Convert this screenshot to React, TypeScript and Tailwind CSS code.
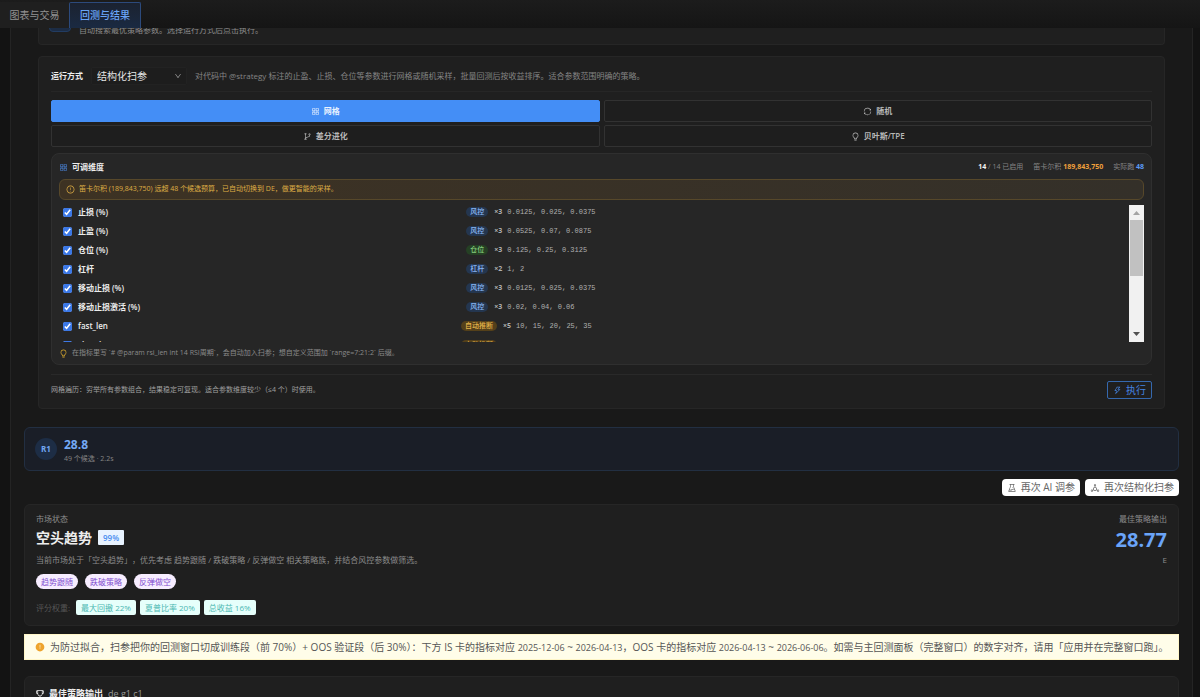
import type { ReactNode } from "react";
import {
  AiFillExclamationCircle,
  AiOutlineAppstore,
  AiOutlineBranches,
  AiOutlineBulb,
  AiOutlineDeploymentUnit,
  AiOutlineDown,
  AiOutlineExclamationCircle,
  AiOutlineExperiment,
  AiOutlineSync,
  AiOutlineThunderbolt,
  AiOutlineTrophy,
} from "react-icons/ai";

type Tone = "blue" | "green" | "amber";

const toneClass: Record<Tone, string> = {
  blue: "bg-[#24364f] text-[#8bb8f5]",
  green: "bg-[#254024] text-[#86cf7c]",
  amber: "bg-[#54401a] text-[#e5b54a]",
};

const dimensions: { id: string; name: string; tag: string; tone: Tone; count: number; values: string }[] = [
  { id: "sl", name: "止损 (%)", tag: "风控", tone: "blue", count: 3, values: "0.0125, 0.025, 0.0375" },
  { id: "tp", name: "止盈 (%)", tag: "风控", tone: "blue", count: 3, values: "0.0525, 0.07, 0.0875" },
  { id: "pos", name: "仓位 (%)", tag: "仓位", tone: "green", count: 3, values: "0.125, 0.25, 0.3125" },
  { id: "lev", name: "杠杆", tag: "杠杆", tone: "blue", count: 2, values: "1, 2" },
  { id: "trail", name: "移动止损 (%)", tag: "风控", tone: "blue", count: 3, values: "0.0125, 0.025, 0.0375" },
  { id: "trail-act", name: "移动止损激活 (%)", tag: "风控", tone: "blue", count: 3, values: "0.02, 0.04, 0.06" },
  { id: "fast", name: "fast_len", tag: "自动推断", tone: "amber", count: 5, values: "10, 15, 20, 25, 35" },
  { id: "slow", name: "slow_len", tag: "自动推断", tone: "amber", count: 5, values: "20, 30, 40, 50, 70" },
];

const methods = [
  { label: "网格", icon: <AiOutlineAppstore />, active: true },
  { label: "随机", icon: <AiOutlineSync />, active: false },
  { label: "差分进化", icon: <AiOutlineBranches />, active: false },
  { label: "贝叶斯/TPE", icon: <AiOutlineBulb />, active: false },
];

function Header() {
  return (
    <header className="flex h-7 shrink-0 items-end bg-gradient-to-b from-[#1c1c1c] to-[#151515]">
      <button className="h-[26px] w-[69px] bg-[#1f1f1f] text-[10px] text-[#929292]">图表与交易</button>
      <button className="h-[26px] w-[72px] rounded-t-xs border border-b-0 border-[#2c4a7c] bg-gradient-to-b from-[#1b2230] to-[#1a2a42] text-[10px] font-medium text-[#6aa5f8]">
        回测与结果
      </button>
    </header>
  );
}

function Dimensions() {
  return (
    <section className="mt-1.5 rounded-lg border border-[#2f2f2f] bg-[#262626] px-[7px] pt-1.5 pb-1">
      <div className="flex h-[14px] items-center justify-between text-[7px] text-[#858585]">
        <h3 className="flex items-center gap-1 text-[8px] font-bold text-[#eeeeee]">
          <AiOutlineAppstore className="size-[9px] text-[#4a86de]" />
          可调维度
        </h3>
        <div className="flex gap-[10px]">
          <span>
            <b className="text-[#f2f2f2]">14</b> / 14 已启用
          </span>
          <span>
            笛卡尔积 <b className="text-[#f0a03c]">189,843,750</b>
          </span>
          <span>
            实际跑 <b className="text-[#5c9af5]">48</b>
          </span>
        </div>
      </div>
      <div
        role="alert"
        className="mt-[5px] flex h-[21px] items-center gap-1 rounded-md border border-[#57482a] bg-gradient-to-r from-[#3d3223] to-[#343029] px-1.5 text-[7px] text-[#dfae45]"
      >
        <AiOutlineExclamationCircle className="size-[9px]" />
        笛卡尔积 (189,843,750) 远超 48 个候选预算，已自动切换到 DE，做更智能的采样。
      </div>
      <div className="mt-[5px] flex h-[137px]">
        <div className="min-w-0 flex-1 overflow-hidden">
          {dimensions.map((d) => (
            <div key={d.id} className="grid h-[19px] grid-cols-[9px_61fr_auto_100fr] items-center gap-x-1.5 pr-2 pb-[5px] pl-1">
              <input id={d.id} type="checkbox" defaultChecked className="size-[9px] accent-[#3b78e7]" />
              <label htmlFor={d.id} className="text-[8px] font-semibold text-[#ececec]">
                {d.name}
              </label>
              <span className={`rounded-full px-1 text-[7px] leading-[10px] font-medium ${toneClass[d.tone]}`}>{d.tag}</span>
              <span className="font-['Liberation_Mono','Noto_Sans_CJK_SC',monospace] text-[7px] text-[#b0b0b0]">
                <b className="mr-[5px] font-['Open_Sans','Noto_Sans_CJK_SC',sans-serif]">×{d.count}</b>
                {d.values}
              </span>
            </div>
          ))}
        </div>
        <div className="flex w-[15px] shrink-0 flex-col items-center bg-[#f1f1f1]" aria-hidden="true">
          <svg viewBox="0 0 15 15" className="size-[15px]">
            <path d="M4 10h7L7.500 6z" fill="#a3a3a3" />
          </svg>
          <div className="h-14 w-[13px] bg-[#c1c1c1]" />
          <svg viewBox="0 0 15 15" className="mt-auto size-[15px]">
            <path d="M4 5h7L7.500 9z" fill="#505050" />
          </svg>
        </div>
      </div>
      <p className="mt-1 flex h-[14px] items-center gap-1 text-[7px] text-[#8a8a8a]">
        <AiOutlineBulb className="size-[9px] text-[#d9a92e]" />
        在指标里写 `# @param rsi_len int 14 RSI周期`，会自动加入扫参；想自定义范围加 `range=7:21:2` 后缀。
      </p>
    </section>
  );
}

function RunCard() {
  return (
    <section className="mx-[27px] mt-[11px] rounded-sm border border-[#262626] bg-[#1f1f1f] px-3 pt-[10px] pb-[9px]">
      <div className="flex h-[25px] items-start border-b border-[#262626]">
        <label htmlFor="mode" className="text-[8px] leading-[18px] font-bold text-[#eeeeee]">
          运行方式
        </label>
        <div className="relative ml-2">
          <select
            id="mode"
            className="block h-[18px] w-24 appearance-none rounded-xs border border-[#222222] bg-[#1d1d1d] px-[5px] text-[10px] leading-4 text-[#e6e6e6]"
          >
            <option>结构化扫参</option>
          </select>
          <AiOutlineDown className="pointer-events-none absolute top-[5px] right-[5px] size-2 text-[#9a9a9a]" />
        </div>
        <p className="ml-2 text-[8px] leading-[18px] text-[#858585]">
          对代码中 @strategy 标注的止盈、止损、仓位等参数进行网格或随机采样，批量回测后按收益排序。适合参数范围明确的策略。
        </p>
      </div>
      <div className="mt-2 grid grid-cols-2 gap-x-1 gap-y-[3px]">
        {methods.map((m) => (
          <button
            key={m.label}
            className={`flex h-[22px] items-center justify-center gap-1 rounded-xs border text-[8px] font-semibold ${
              m.active ? "border-[#448ef6] bg-[#448ef6] text-[#e9f2ff]" : "border-[#323232] bg-[#1e1e1e] text-[#b8b8b8]"
            }`}
          >
            <span className="text-[9px]">{m.icon}</span>
            {m.label}
          </button>
        ))}
      </div>
      <Dimensions />
      <div className="mt-[9px] flex items-center justify-between border-t border-[#292929] pt-1.5">
        <p className="text-[7px] text-[#a0a0a0]">
          网格遍历：穷举所有参数组合，结果稳定可复现。适合参数维度较少（≤4 个）时使用。
        </p>
        <button className="flex h-[18px] w-[45px] items-center justify-center gap-1 rounded-xs border border-[#3568ae] text-[10px] text-[#4583e0]">
          <AiOutlineThunderbolt className="size-[9px]" />
          执行
        </button>
      </div>
    </section>
  );
}

function Tag({ children, className }: { children: ReactNode; className: string }) {
  return <span className={`h-[15px] px-[5px] text-[8px] leading-[15px] ${className}`}>{children}</span>;
}

function MarketCard() {
  return (
    <section className="mt-2 flex h-[122px] justify-between rounded-md border border-[#262626] bg-[#1f1f1f] px-[11px] py-2">
      <div>
        <p className="text-[8px] leading-3 text-[#8c8c8c]">市场状态</p>
        <div className="mt-[3px] flex h-[18px] items-center gap-1.5">
          <h2 className="text-[14px] font-bold text-[#ededed]">空头趋势</h2>
          <Tag className="rounded-[1px] bg-[#e8f3ff] font-semibold text-[#4a8df0]">99%</Tag>
        </div>
        <p className="mt-2 text-[8px] leading-3 text-[#8c8c8c] [text-spacing-trim:space-all]">
          当前市场处于「空头趋势」，优先考虑 趋势跟随 / 跌破策略 / 反弹做空 相关策略族，并结合风控参数做筛选。
        </p>
        <div className="mt-2 flex gap-[7px]">
          {["趋势跟随", "跌破策略", "反弹做空"].map((t) => (
            <Tag key={t} className="rounded-full bg-[#f7edff] text-[#8350cf]">
              {t}
            </Tag>
          ))}
        </div>
        <div className="mt-[11px] flex items-center gap-1">
          <span className="mr-0.5 text-[8px] text-[#555555]">评分权重:</span>
          {["最大回撤 22%", "夏普比率 20%", "总收益 16%"].map((t) => (
            <Tag key={t} className="rounded-xs bg-[#e6fffb] text-[#4bb8b2]">
              {t}
            </Tag>
          ))}
        </div>
      </div>
      <div className="text-right">
        <p className="text-[8px] leading-3 text-[#8c8c8c]">最佳策略输出</p>
        <p className="mt-[3px] text-[20px] leading-6 font-bold text-[#6aa4f8]">28.77</p>
        <p className="mt-0.5 text-[8px] leading-3 text-[#8c8c8c]">E</p>
      </div>
    </section>
  );
}

export default function App() {
  return (
    <div className="flex h-screen flex-col overflow-hidden bg-[#131313] font-['Open_Sans','Noto_Sans_CJK_SC',sans-serif]" lang="zh-CN">
      <Header />
      <main className="mr-[7px] ml-[10px] min-h-0 flex-1 overflow-hidden border-x border-[#242424] bg-[#191919]">
        <section className="mx-[27px] flex h-[17px] items-end gap-2 overflow-hidden rounded-b-sm border border-t-0 border-[#262626] bg-[#1f1f1f] px-[10px]">
          <span className="mb-3 h-5 w-[22px] shrink-0 rounded-sm border border-[#223c62] bg-[#1c2c44]" />
          <p className="mb-2 text-[8px] leading-3 text-[#8c8c8c]">自动搜索最优策略参数。选择运行方式后点击执行。</p>
        </section>
        <RunCard />
        <div className="mx-[13px] mt-[18px]">
          <section className="flex h-11 items-center gap-[7px] rounded-md border border-[#222f42] bg-[#1a1e27] px-[10px]">
            <span className="flex size-[22px] items-center justify-center rounded-full bg-[#1d2d45] text-[8px] font-bold text-[#70a6f2]">R1</span>
            <div className="pt-[3px]">
              <p className="text-[12px] leading-4 font-bold text-[#74a9f5]">28.8</p>
              <p className="text-[7px] leading-3 text-[#858585]">49 个候选 · 2.2s</p>
            </div>
          </section>
          <div className="mt-2 flex justify-end gap-[5px]">
            <button className="flex h-[17px] items-center gap-1 rounded-sm bg-white px-[5px] text-[10px] text-[#666666]">
              <AiOutlineExperiment className="size-[10px]" />
              再次 AI 调参
            </button>
            <button className="flex h-[17px] items-center gap-1 rounded-sm bg-white px-[5px] text-[10px] text-[#666666]">
              <AiOutlineDeploymentUnit className="size-[10px]" />
              再次结构化扫参
            </button>
          </div>
          <MarketCard />
          <div role="note" className="mt-2 flex h-[26px] items-center gap-[5px] border border-[#fff6c8] bg-[#fffde9] px-[10px] text-[10px] text-[#555555]">
            <AiFillExclamationCircle className="size-[10px] shrink-0 text-[#eea32c]" />
            <p className="whitespace-nowrap">
              为防过拟合，扫参把你的回测窗口切成训练段（前 70%）+ OOS 验证段（后 30%）：下方 IS 卡的指标对应{" "}
              <time className="text-[9px]">2025-12-06</time> ~ <time className="text-[9px]">2026-04-13</time>，OOS 卡的指标对应{" "}
              <time className="text-[9px]">2026-04-13</time> ~ <time className="text-[9px]">2026-06-06</time>
              。如需与主回测面板（完整窗口）的数字对齐，请用「应用并在完整窗口跑」。
            </p>
          </div>
          <section className="mt-4 h-20 rounded-md border border-[#262626] bg-[#1f1f1f] px-[10px] pt-[9px]">
            <h2 className="flex items-center gap-1 text-[9px] leading-4 font-bold text-[#ededed]">
              <AiOutlineTrophy className="size-[10px]" />
              最佳策略输出
              <span className="ml-px font-normal text-[#999999]">de g1 c1</span>
            </h2>
          </section>
        </div>
      </main>
    </div>
  );
}
